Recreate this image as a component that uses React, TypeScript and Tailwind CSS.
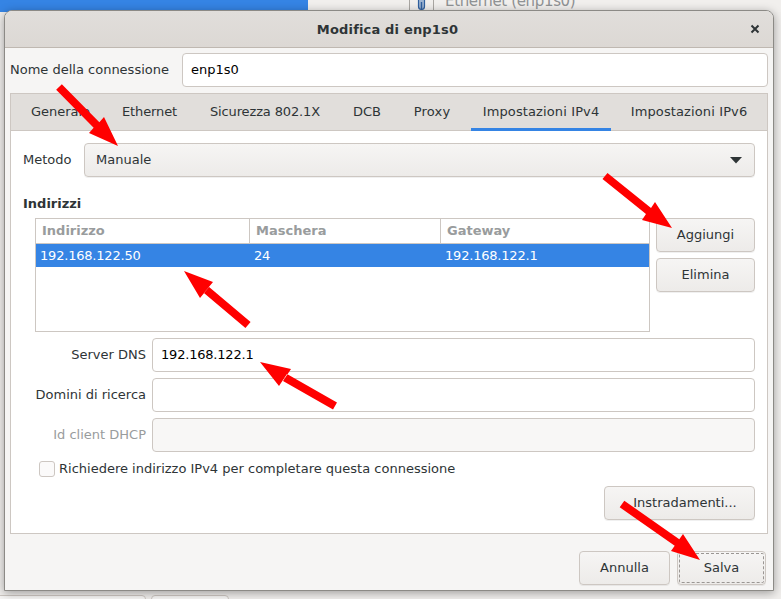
import React from "react";

type P = [number, number];

function Arrow({ tail, tip, b1, b2, w = 8 }: { tail: P; tip: P; b1: P; b2: P; w?: number }) {
  const mid: P = [(b1[0] + b2[0]) / 2, (b1[1] + b2[1]) / 2];
  const dx = mid[0] - tail[0];
  const dy = mid[1] - tail[1];
  const len = Math.hypot(dx, dy);
  const nx = (-dy / len) * (w / 2);
  const ny = (dx / len) * (w / 2);
  const pts = [
    [tail[0] + nx, tail[1] + ny],
    [mid[0] + nx, mid[1] + ny],
    b1,
    tip,
    b2,
    [mid[0] - nx, mid[1] - ny],
    [tail[0] - nx, tail[1] - ny],
  ];
  const ordered = pts.map((p) => p.join(",")).join(" ");
  return <polygon points={ordered} fill="#ff0000" />;
}

const btn =
  "flex items-center justify-center rounded-[4px] border border-[#cdc7c2] bg-gradient-to-b from-[#f6f5f4] to-[#edebe9] text-[#2e3436] shadow-[0_1px_0_rgba(0,0,0,0.06)]";
const input = "h-[34px] rounded-[4px] border border-[#cdc7c2] px-2 flex items-center text-black";

function FieldRow({ label, value, disabled }: { label: string; value?: string; disabled?: boolean }) {
  return (
    <div className="flex items-center">
      <div className={`w-[129px] whitespace-nowrap pr-[6px] text-right ${disabled ? "text-[#999c9d]" : "text-[#2e3436]"}`}>
        {label}
      </div>
      <div className={`${input} w-[603px] ${disabled ? "bg-[#f8f7f6]" : "bg-white"}`}>
        <span className="tracking-[-0.2px]">{value}</span>
      </div>
    </div>
  );
}

const tabs: { label: string; cls: string }[] = [
  { label: "Generale", cls: "w-[83px]" },
  { label: "Ethernet", cls: "w-[79px] tracking-[-0.1px]" },
  { label: "Sicurezza 802.1X", cls: "w-[136px] tracking-[-0.13px]" },
  { label: "DCB", cls: "w-[52px]" },
  { label: "Proxy", cls: "w-[62px] tracking-[0.2px]" },
  { label: "Impostazioni IPv4", cls: "w-[140px] tracking-[0.12px]" },
  { label: "Impostazioni IPv6", cls: "w-[140px] tracking-[0.12px]" },
];

export default function App() {
  return (
    <div
      className="relative h-[599px] w-[781px] overflow-hidden bg-[#f0eeec] text-[13px] leading-[16px]"
      style={{ fontFamily: '"DejaVu Sans", sans-serif' }}
    >
      {/* desktop behind the dialog */}
      <div className="absolute left-0 top-0 h-[12px] w-[308px] bg-[#3584e4]" />
      <div className="absolute left-[308px] top-0 h-[12px] w-[473px] bg-[#f1efed]" />
      <div className="absolute left-[445px] top-[-8px] text-[15px] leading-[18px] tracking-[-0.35px] text-[#8f9294]">Ethernet (enp1s0)</div>
      <div className="absolute left-[409px] top-0 h-[10px] w-[25px] border-x border-[#a9a6a2]" />
      <svg className="absolute left-[416px] top-0" width="11" height="11" viewBox="0 0 11 11">
        <path d="M2.5 0v6.5a3 3 0 0 0 6 0V0" fill="#9db4d2" stroke="#2f5f9e" strokeWidth="1.2" />
        <path d="M5.5 2v8" stroke="#2f5f9e" strokeWidth="1.4" />
      </svg>
      <div className="absolute left-[-10px] top-[595px] h-[12px] w-[156px] rounded-[4px] border border-[#cdc7c2] bg-[#f6f5f4]" />
      <div className="absolute left-[151px] top-[595px] h-[12px] w-[78px] rounded-[4px] border border-[#cdc7c2] bg-[#f6f5f4]" />

      {/* dialog window */}
      <div className="absolute left-[4px] top-[10px] flex h-[581px] w-[770px] flex-col rounded-t-[8px] border border-[#8c8a86] bg-[#f6f5f4] shadow-[0_2px_10px_rgba(0,0,0,0.35)]">
        <div className="relative flex h-[37px] shrink-0 items-center justify-center rounded-t-[7px] border-b border-[#bfb8b1] bg-gradient-to-b from-[#e1dedb] to-[#dcd8d4] font-bold text-[#2e3436]">
          <span className="pr-[3px] pt-[1px] tracking-[0.17px]">Modifica di enp1s0</span>
          <svg className="absolute right-[13px] top-[13px]" width="10" height="10" viewBox="0 0 10 10">
            <path d="M1.5 1.5l7 7M8.5 1.5l-7 7" stroke="#2e3436" strokeWidth="2" />
          </svg>
        </div>

        <div className="flex min-h-0 flex-1 flex-col px-[5px] pt-[5px]">
          <div className="flex items-center">
            <div className="w-[172px] text-[#2e3436]">Nome della connessione</div>
            <div className={`${input} w-[586px] bg-white`}>enp1s0</div>
          </div>

          <div className="mt-[6px] flex h-[441px] w-[758px] flex-col border border-[#cdc7c2] bg-white">
            <div className="flex h-[37px] shrink-0 gap-2 border-b border-[#cdc7c2] bg-[#e1dedb] pl-2 text-[#2e3436]">
              {tabs.map((t) => (
                <div
                  key={t.label}
                  className={`flex items-center justify-center whitespace-nowrap pb-[1px] ${t.cls} ${
                    t.label === "Impostazioni IPv4" ? "-mb-px border-b-[3px] border-[#3584e4] pt-[3px]" : ""
                  }`}
                >
                  {t.label}
                </div>
              ))}
            </div>

            <div className="flex flex-1 flex-col px-3 pt-3">
              <div className="flex items-center">
                <div className="w-[61px] text-[#2e3436]">Metodo</div>
                <div className={`${btn} h-[34px] w-[671px] !justify-between px-[11px]`}>
                  <span>Manuale</span>
                  <svg width="12" height="7" viewBox="0 0 12 7" className="mr-[1px]">
                    <path d="M0 0h12L6 6.5z" fill="#2e3436" />
                  </svg>
                </div>
              </div>

              <div className="mt-[19px] font-bold text-[#2e3436]">Indirizzi</div>

              <div className="mt-[6px] flex pl-3">
                <div className="h-[114px] w-[615px] border border-[#cdc7c2] bg-white">
                  <div className="flex h-[25px] border-b border-[#cdc7c2] font-bold text-[#999c9d]">
                    <div className="w-[214px] border-r border-[#cdc7c2] pl-[6px] leading-[23px]">Indirizzo</div>
                    <div className="w-[191px] border-r border-[#cdc7c2] pl-[6px] leading-[23px]">Maschera</div>
                    <div className="flex-1 pl-[6px] leading-[23px]">Gateway</div>
                  </div>
                  <div className="flex h-[23px] items-center bg-[#3584e4] text-white">
                    <div className="w-[214px] pl-[4px] tracking-[-0.2px]">192.168.122.50</div>
                    <div className="w-[191px] pl-[4px] tracking-[-0.2px]">24</div>
                    <div className="flex-1 pl-[4px] tracking-[-0.2px]">192.168.122.1</div>
                  </div>
                </div>
                <div className="ml-[6px] flex w-[99px] flex-col gap-[6px]">
                  <div className={`${btn} h-[34px]`}>Aggiungi</div>
                  <div className={`${btn} h-[34px]`}>Elimina</div>
                </div>
              </div>

              <div className="mt-[6px] flex flex-col gap-[6px]">
                <FieldRow label="Server DNS" value="192.168.122.1" />
                <FieldRow label="Domini di ricerca" />
                <FieldRow label="Id client DHCP" disabled />
              </div>

              <div className="mt-[9px] flex items-center pl-[16px] text-[#2e3436]">
                <div className="mr-[4px] h-[16px] w-[16px] rounded-[3px] border border-[#cdc7c2] bg-[#fbfafa]" />
                Richiedere indirizzo IPv4 per completare questa connessione
              </div>

              <div className="mt-[9px] flex justify-end">
                <div className={`${btn} h-[34px] w-[151px] pl-[11px]`}>Instradamenti...</div>
              </div>
            </div>
          </div>

          <div className="mt-[17px] flex justify-end gap-[7px] pr-[2px]">
            <div className={`${btn} h-[34px] w-[91px]`}>Annulla</div>
            <div className={`${btn} relative h-[34px] w-[89px]`}>
              Salva
              <div className="absolute inset-[1px] rounded-[2px] border border-dashed border-[#9a9693]" />
            </div>
          </div>
        </div>
      </div>

      {/* red annotation arrows */}
      <svg className="pointer-events-none absolute left-0 top-0" width="781" height="599" viewBox="0 0 781 599">
        <Arrow tail={[59, 87]} tip={[118, 146]} b1={[89, 133]} b2={[104, 117]} />
        <Arrow tail={[605, 176]} tip={[672, 228]} b1={[642, 220]} b2={[655, 202]} />
        <Arrow tail={[248, 325]} tip={[184, 271]} b1={[200, 298]} b2={[213, 282]} />
        <Arrow tail={[335, 406]} tip={[260, 362]} b1={[279, 386]} b2={[291, 369]} />
        <Arrow tail={[622, 504]} tip={[700, 560]} b1={[671, 551]} b2={[683, 534]} />
      </svg>
    </div>
  );
}
